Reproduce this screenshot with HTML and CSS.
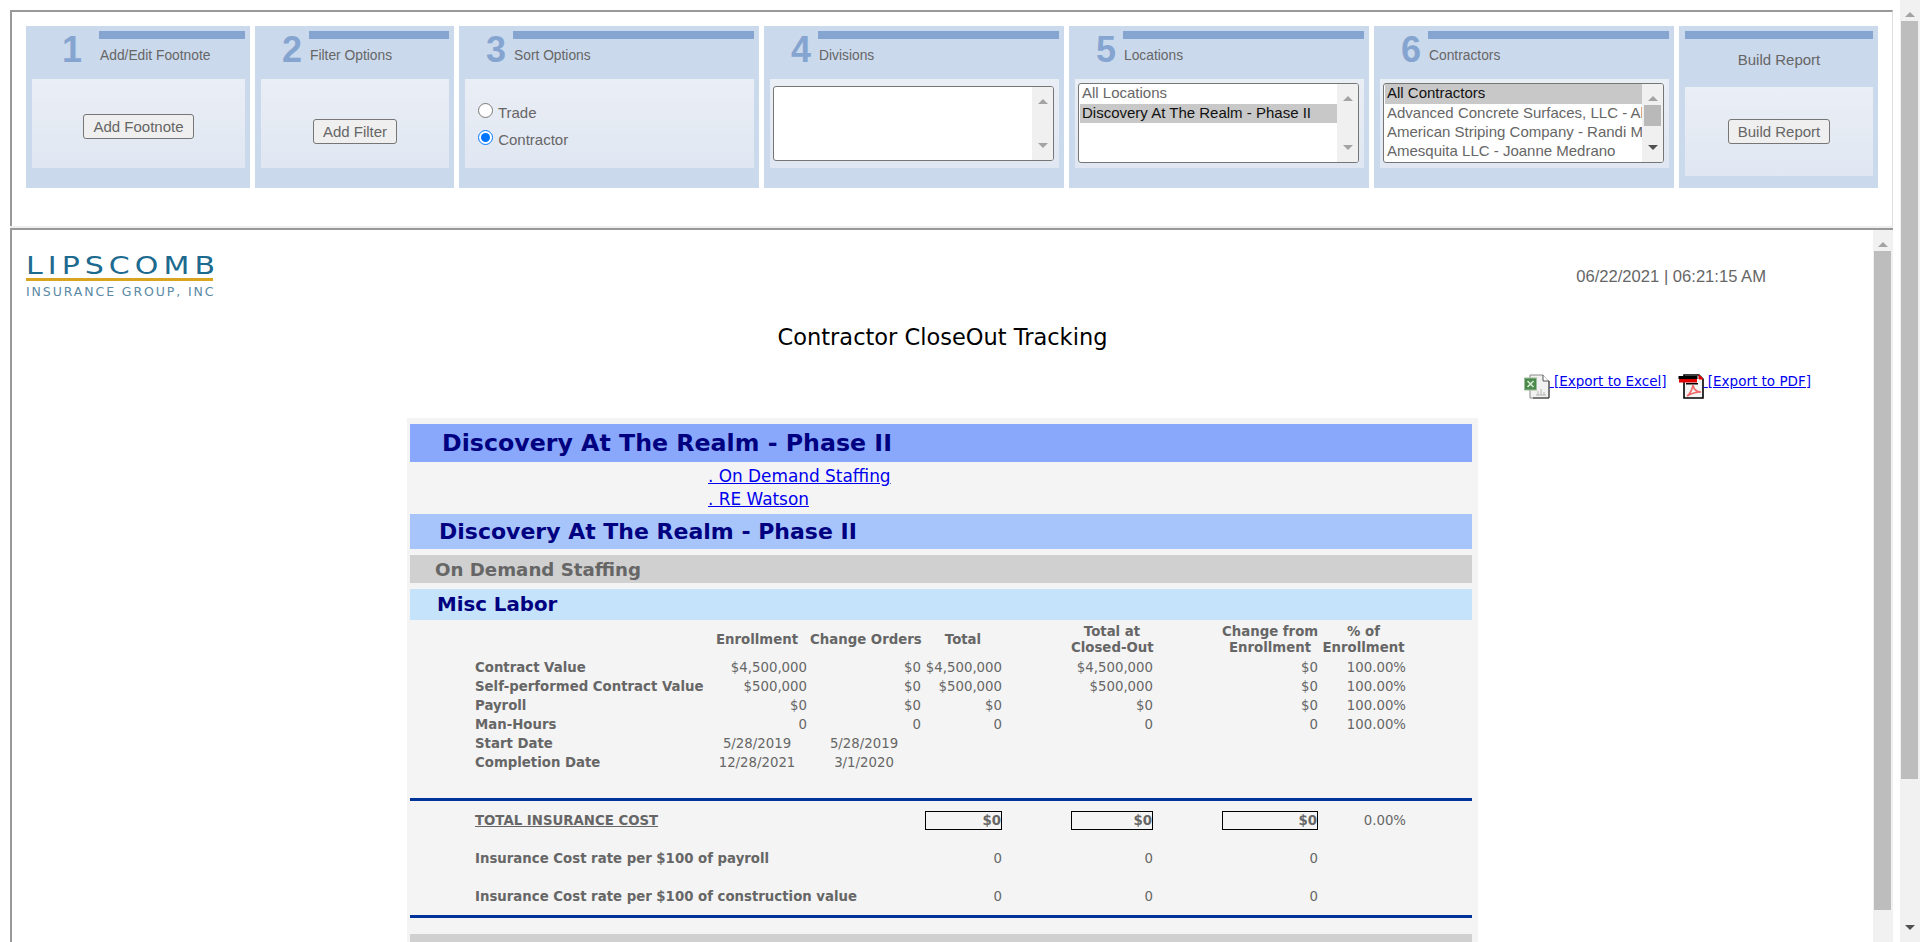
FILE: index.html
```html
<!DOCTYPE html>
<html>
<head>
    <title>Contractor CloseOut Tracking</title>
    <link rel="stylesheet" href="styles.css">
</head>
<body>
<div class="page">
    <div class="main">
        <div class="options">
            <div class="card card-first">
                <div class="card-head">
                    <div class="num">1</div>
                    <div class="head-right"><div class="bar"></div><div class="card-title">Add/Edit Footnote</div></div>
                </div>
                <div class="card-body footnote-body"><button>Add Footnote</button></div>
            </div>
            <div class="card card-small">
                <div class="card-head">
                    <div class="num">2</div>
                    <div class="head-right"><div class="bar"></div><div class="card-title">Filter Options</div></div>
                </div>
                <div class="card-body filter-body"><button>Add Filter</button></div>
            </div>
            <div class="card">
                <div class="card-head">
                    <div class="num">3</div>
                    <div class="head-right"><div class="bar"></div><div class="card-title">Sort Options</div></div>
                </div>
                <div class="card-body sort-body">
                    <label class="radio"><input type="radio" name="sort"> Trade</label>
                    <label class="radio"><input type="radio" name="sort" checked> Contractor</label>
                </div>
            </div>
            <div class="card">
                <div class="card-head">
                    <div class="num">4</div>
                    <div class="head-right"><div class="bar"></div><div class="card-title">Divisions</div></div>
                </div>
                <div class="card-body list-body">
                    <div class="listbox listbox-short">
                        <div class="list-items"></div>
                        <div class="list-scroll"><span class="arrow-up"></span><span class="arrow-down"></span></div>
                    </div>
                </div>
            </div>
            <div class="card">
                <div class="card-head">
                    <div class="num">5</div>
                    <div class="head-right"><div class="bar"></div><div class="card-title">Locations</div></div>
                </div>
                <div class="card-body list-body">
                    <div class="listbox">
                        <div class="list-items">
                            <div class="item">All Locations</div>
                            <div class="item selected">Discovery At The Realm - Phase II</div>
                        </div>
                        <div class="list-scroll"><span class="arrow-up"></span><span class="arrow-down"></span></div>
                    </div>
                </div>
            </div>
            <div class="card">
                <div class="card-head">
                    <div class="num">6</div>
                    <div class="head-right"><div class="bar"></div><div class="card-title">Contractors</div></div>
                </div>
                <div class="card-body list-body">
                    <div class="listbox">
                        <div class="list-items">
                            <div class="item selected">All Contractors</div>
                            <div class="item">Advanced Concrete Surfaces, LLC - Al</div>
                            <div class="item">American Striping Company - Randi M</div>
                            <div class="item">Amesquita LLC - Joanne Medrano</div>
                        </div>
                        <div class="list-scroll">
                            <span class="arrow-up"></span>
                            <span class="list-thumb"></span>
                            <span class="arrow-down arrow-dark"></span>
                        </div>
                    </div>
                </div>
            </div>
            <div class="card card-small card-build">
                <div class="bar"></div>
                <div class="build-title">Build Report</div>
                <div class="card-body filter-body"><button>Build Report</button></div>
            </div>
        </div>

        <div class="report-frame">
            <div class="report-scroll">
                <div class="report-top">
                    <div class="logo">
                        <div class="logo-name">LIPSCOMB</div>
                        <div class="logo-rule"></div>
                        <div class="logo-sub">INSURANCE GROUP, INC</div>
                    </div>
                    <div class="stamp">06/22/2021 | 06:21:15 AM</div>
                </div>
                <h1 class="report-title">Contractor CloseOut Tracking</h1>
                <div class="exports">
                    <a href="#" class="export">
                        <svg class="file-icon" viewBox="0 0 26 25">
                            <path d="M6 1h13l6 6v17H6z" fill="#f1f1f1" stroke="#8a8a8a"/>
                            <path d="M19 1v6h6" fill="#fff" stroke="#555"/>
                            <path d="M25 7v17H9" fill="none" stroke="#333"/>
                            <rect x="0.5" y="4" width="12" height="12" fill="#4c8a4c" stroke="#9dbb9d"/>
                            <path d="M3.5 7l6 6M9.5 7l-6 6" stroke="#d8ecd8" stroke-width="1.6"/>
                            <path d="M14 21v-4M17 21v-6M20 21v-3M12 21h10" stroke="#b5b5b5"/>
                        </svg>
                        <span>[Export to Excel]</span>
                    </a>
                    <a href="#" class="export">
                        <svg class="file-icon" viewBox="0 0 26 25">
                            <path d="M6 1h15l4 4v19H6z" fill="#f4f4f4" stroke="#000" stroke-width="1.6"/>
                            <path d="M21 1l4 4h-4z" fill="#e00000" stroke="#e00000"/>
                            <rect x="0.5" y="2" width="19" height="3" fill="#000"/>
                            <rect x="1" y="5" width="18" height="3.5" fill="#e00000"/>
                            <rect x="8" y="9" width="12" height="1.5" fill="#000"/>
                            <path d="M9 22c3-2 5-6 6-11 1 5 4 7 8 7-4 0-9 1-14 4z" fill="none" stroke="#ef6b6b" stroke-width="1.6"/>
                        </svg>
                        <span>[Export to PDF]</span>
                    </a>
                </div>

                <div class="report">
                    <div class="band band-project">Discovery At The Realm - Phase II</div>
                    <div class="toc">
                        <a href="#">. On Demand Staffing</a>
                        <a href="#">. RE Watson</a>
                    </div>
                    <div class="band band-location">Discovery At The Realm - Phase II</div>
                    <div class="band band-contractor">On Demand Staffing</div>
                    <div class="band band-trade">Misc Labor</div>
                    <table class="figures">
                        <colgroup>
                            <col class="c-label"><col class="c-enroll"><col class="c-orders"><col class="c-total">
                            <col class="c-gap"><col class="c-closed"><col class="c-gap"><col class="c-change">
                            <col class="c-pct"><col>
                        </colgroup>
                        <tr class="head-row">
                            <th></th>
                            <th>Enrollment</th>
                            <th>Change Orders</th>
                            <th>Total</th>
                            <th></th>
                            <th>Total at<br>Closed-Out</th>
                            <th></th>
                            <th>Change from<br>Enrollment</th>
                            <th>% of<br>Enrollment</th>
                            <th></th>
                        </tr>
                        <tr><td class="label">Contract Value</td><td>$4,500,000</td><td>$0</td><td>$4,500,000</td><td></td><td>$4,500,000</td><td></td><td>$0</td><td>100.00%</td><td></td></tr>
                        <tr><td class="label">Self-performed Contract Value</td><td>$500,000</td><td>$0</td><td>$500,000</td><td></td><td>$500,000</td><td></td><td>$0</td><td>100.00%</td><td></td></tr>
                        <tr><td class="label">Payroll</td><td>$0</td><td>$0</td><td>$0</td><td></td><td>$0</td><td></td><td>$0</td><td>100.00%</td><td></td></tr>
                        <tr><td class="label">Man-Hours</td><td>0</td><td>0</td><td>0</td><td></td><td>0</td><td></td><td>0</td><td>100.00%</td><td></td></tr>
                        <tr><td class="label">Start Date</td><td class="date">5/28/2019</td><td class="date">5/28/2019</td><td colspan="7"></td></tr>
                        <tr><td class="label">Completion Date</td><td class="date">12/28/2021</td><td class="date">3/1/2020</td><td colspan="7"></td></tr>
                        <tr class="spacer-row"><td colspan="10"></td></tr>
                        <tr class="rule-row"><td colspan="10"></td></tr>
                        <tr class="cost-row">
                            <td class="label"><u>TOTAL INSURANCE COST</u></td><td></td><td></td>
                            <td><span class="boxed boxed-total">$0</span></td><td></td>
                            <td><span class="boxed">$0</span></td><td></td>
                            <td><span class="boxed">$0</span></td>
                            <td>0.00%</td><td></td>
                        </tr>
                        <tr class="cost-row"><td class="label" colspan="3">Insurance Cost rate per $100 of payroll</td><td>0</td><td></td><td>0</td><td></td><td>0</td><td colspan="2"></td></tr>
                        <tr class="cost-row"><td class="label" colspan="3">Insurance Cost rate per $100 of construction value</td><td>0</td><td></td><td>0</td><td></td><td>0</td><td colspan="2"></td></tr>
                        <tr class="rule-row"><td colspan="10"></td></tr>
                    </table>
                    <div class="band band-next"></div>
                </div>
            </div>
            <div class="scrollbar scrollbar-inner">
                <span class="arrow-up"></span>
                <span class="thumb thumb-inner"></span>
            </div>
        </div>
    </div>
    <div class="scrollbar scrollbar-page">
        <span class="arrow-up"></span>
        <span class="thumb thumb-page"></span>
        <span class="arrow-down arrow-dark"></span>
    </div>
</div>
</body>
</html>
```

FILE: styles.css
```css
body {
    margin: 0;
    font-family: "Liberation Sans", Arial, sans-serif;
    color: #666;
    background: #fff;
}
.page {
    display: flex;
    height: 942px;
    overflow: hidden;
}
.main {
    width: 1883px;
    margin: 10px 7px 0 10px;
    display: flex;
    flex-direction: column;
}

/* top option cards */
.options {
    display: flex;
    flex: none;
    gap: 5px;
    height: 216px;
    padding: 14px 0 0 14px;
    box-sizing: border-box;
    border-top: 2px solid #999;
    border-left: 2px solid #999;
    border-right: 1px solid #ddd;
    box-shadow: 0 2px 0 #eee;
}
.card {
    width: 300px;
    height: 162px;
    padding: 5px 5px 0 6px;
    box-sizing: border-box;
    background: #cbd9ec;
}
.card-first { width: 224px; }
.card-small { width: 199px; }
.card-head {
    display: flex;
    height: 48px;
}
.num {
    width: 48px;
    padding-right: 7px;
    box-sizing: border-box;
    font-size: 36px;
    font-weight: bold;
    line-height: 36px;
    margin-top: 1px;
    text-align: right;
    color: #85a5d0;
}
.card-first .num {
    width: 67px;
    padding-right: 17px;
}
.head-right { flex: 1; }
.bar {
    height: 8px;
    background: #85a5d0;
}
.card-title {
    margin: 9px 0 0 1px;
    font-size: 13.8px;
    line-height: 16px;
}
.card-body {
    height: 89px;
    box-sizing: border-box;
    background: linear-gradient(#eaeef5, #e0e7f2);
    text-align: center;
}
.card-body button {
    height: 25px;
    padding: 0 9px;
    font-family: "Liberation Sans", Arial, sans-serif;
    font-size: 15px;
    color: #666;
    background: #efefef;
    border: 1px solid #767676;
    border-radius: 3px;
}
.footnote-body { padding-top: 35px; }
.filter-body { padding-top: 32px; }
.card-small:not(.card-build) .filter-body { padding-top: 40px; }
.build-title {
    height: 48px;
    font-size: 15px;
    line-height: 42px;
    text-align: center;
}
.sort-body {
    padding: 20px 0 0 13px;
    text-align: left;
}
.radio {
    display: block;
    height: 27px;
    font-size: 15px;
    line-height: 27px;
}
.radio input {
    width: 15px;
    height: 15px;
    margin: 0 1px 4px 0;
}
.list-body {
    padding: 4px 5px 0 3px;
    text-align: left;
}

/* list boxes drawn by hand so the scrollbars stay put */
.listbox {
    display: flex;
    height: 80px;
    box-sizing: border-box;
    background: #fff;
    border: 1px solid #767676;
    border-radius: 3px;
    overflow: hidden;
}
.listbox-short {
    height: 75px;
    margin-top: 3px;
}
.list-items {
    flex: 1;
    min-width: 0;
    overflow: hidden;
    padding-left: 1px;
}
.item {
    height: 19px;
    padding: 0 2px;
    font-size: 15px;
    line-height: 18px;
    white-space: nowrap;
    overflow: hidden;
}
.item:first-child { height: 20px; }
.item.selected {
    background: #c8c8c8;
    color: #111;
}
.list-scroll {
    position: relative;
    flex: none;
    width: 21px;
    background: #f0f0f0;
}
.list-thumb {
    position: absolute;
    left: 2px;
    top: 21px;
    width: 17px;
    height: 21px;
    background: #b9b9b9;
}

/* shared scroll arrows */
.arrow-up,
.arrow-down {
    position: absolute;
    left: 50%;
    margin-left: -5px;
    width: 0;
    height: 0;
    border-left: 5px solid transparent;
    border-right: 5px solid transparent;
}
.arrow-up {
    top: 12px;
    border-bottom: 5px solid #a3a3a3;
}
.arrow-down {
    bottom: 12px;
    border-top: 5px solid #a3a3a3;
}
.arrow-dark { border-top-color: #505050; }

/* report frame */
.report-frame {
    flex: 1;
    min-height: 0;
    display: flex;
    margin-top: 2px;
    border-top: 2px solid #999;
    border-left: 2px solid #999;
}
.report-scroll {
    flex: 1;
    min-width: 0;
    overflow: hidden;
}
.scrollbar {
    position: relative;
    flex: none;
    background: #f1f1f1;
}
.scrollbar-inner { width: 20px; }
.scrollbar-page { width: 20px; }
.thumb {
    position: absolute;
    display: block;
    left: 1px;
    width: 17px;
    background: #bdbdbd;
}
.thumb-inner {
    top: 21px;
    height: 659px;
}
.thumb-page {
    top: 21px;
    height: 758px;
}
.report-top {
    display: flex;
    justify-content: space-between;
    padding: 24px 107px 0 14px;
}
.logo { width: 187px; }
.logo-name {
    font-family: "DejaVu Sans", sans-serif;
    font-size: 25px;
    line-height: 24px;
    letter-spacing: 4.2px;
    white-space: nowrap;
    color: #1d6a8f;
    transform: scaleX(1.2);
    transform-origin: left center;
}
.logo-rule {
    height: 3px;
    background: #d9a520;
}
.logo-sub {
    margin-top: 4px;
    font-family: "DejaVu Sans", sans-serif;
    font-size: 12.5px;
    line-height: 13px;
    letter-spacing: 1.9px;
    white-space: nowrap;
    color: #5a8aa5;
}
.stamp {
    margin-top: 14px;
    font-size: 16.6px;
    line-height: 18px;
}
.report-title {
    margin: 26px 0 0;
    font-family: "DejaVu Sans", Verdana, sans-serif;
    font-size: 22.5px;
    font-weight: normal;
    line-height: 26px;
    text-align: center;
    color: #000;
}
.exports {
    display: flex;
    justify-content: flex-end;
    gap: 11px;
    height: 62px;
    padding: 24px 62px 0 0;
    box-sizing: border-box;
}
.export {
    font-family: "DejaVu Sans", Verdana, sans-serif;
    font-size: 13.5px;
    line-height: 14px;
    color: #00e;
}
.file-icon {
    width: 26px;
    height: 25px;
    vertical-align: top;
}

/* report body */
.report {
    width: 1062px;
    margin: 6px auto 0;
    padding: 6px 6px 0 3px;
    background: #f4f4f4;
    font-family: "DejaVu Sans", Verdana, sans-serif;
}
.band {
    font-weight: bold;
    color: #000080;
}
.band-project {
    height: 38px;
    padding-left: 32px;
    font-size: 23.7px;
    line-height: 38px;
    background: #8aa8fb;
}
.toc {
    height: 52px;
    padding: 3px 0 0 298px;
    box-sizing: border-box;
    font-size: 16.9px;
    line-height: 23px;
}
.toc a {
    display: block;
    color: #00e;
}
.band-location {
    height: 35px;
    padding-left: 29px;
    font-size: 22px;
    line-height: 36px;
    background: #a8c5fb;
}
.band-contractor {
    height: 28px;
    margin-top: 6px;
    padding-left: 25px;
    font-size: 18.2px;
    line-height: 29px;
    color: #666;
    background: #d0d0d0;
}
.band-trade {
    height: 31px;
    margin-top: 6px;
    padding-left: 27px;
    font-size: 19.8px;
    line-height: 32px;
    background: #c5e3fa;
}
.band-next {
    height: 30px;
    margin-top: 16px;
    background: #d0d0d0;
}
.figures {
    width: 100%;
    table-layout: fixed;
    border-collapse: collapse;
    font-size: 13.3px;
    color: #666;
}
.c-label { width: 297px; }
.c-enroll { width: 100px; }
.c-orders { width: 114px; }
.c-total { width: 81px; }
.c-gap { width: 69px; }
.c-closed { width: 82px; }
.c-change { width: 96px; }
.c-pct { width: 88px; }
.figures th,
.figures td {
    padding: 0;
    white-space: nowrap;
}
.figures th {
    padding-top: 2px;
    font-weight: bold;
    line-height: 16px;
    text-align: center;
    vertical-align: middle;
}
.figures th:nth-child(3),
.figures th:nth-child(4),
.figures th:nth-child(9) { padding-left: 3px; }
.head-row { height: 38px; }
.figures td {
    height: 19px;
    line-height: 19px;
    text-align: right;
}
.figures .label {
    padding-left: 65px;
    font-weight: bold;
    text-align: left;
}
.figures .date {
    text-align: center;
}
.spacer-row td { height: 26px; }
.rule-row td {
    height: 3px;
    line-height: 0;
    font-size: 0;
    background: #003399;
}
.cost-row td { height: 38px; }
.boxed {
    display: block;
    height: 17px;
    line-height: 17px;
    border: 1px solid #000;
    font-weight: bold;
}
.boxed-total { margin-left: 4px; }
```
